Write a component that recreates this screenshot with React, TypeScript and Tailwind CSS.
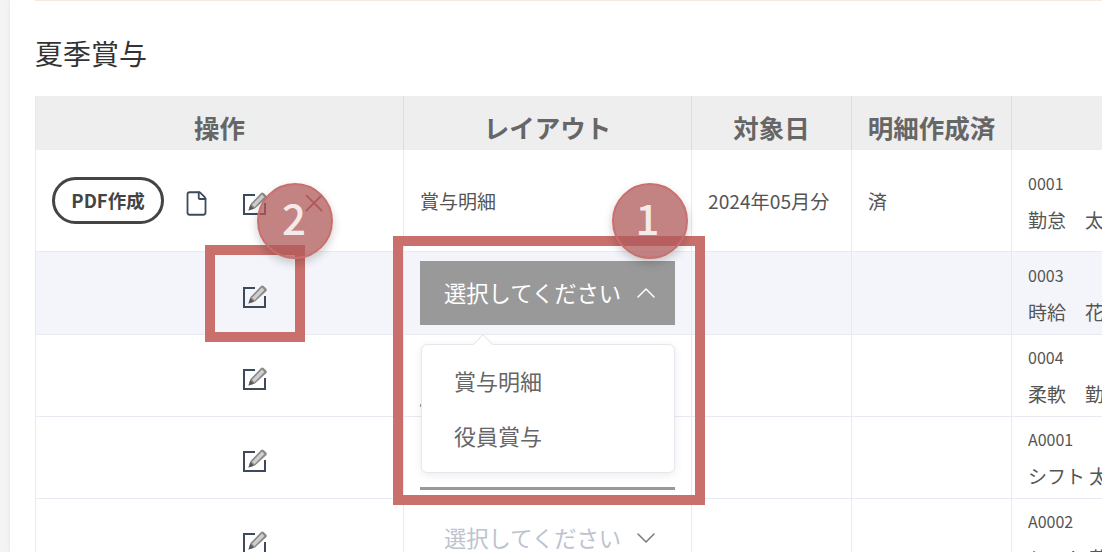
import { ChevronDown, ChevronUp, File, X } from "lucide-react";

const FONT = "font-['Noto_Sans_CJK_JP','Noto_Sans',sans-serif]";

function EditIcon() {
  return (
    <svg width="26" height="26" viewBox="0 0 26 26" fill="none" className="block">
      <path d="M13 5H2V24H23V13" stroke="#3d4a5c" strokeWidth="2" />
      <path d="M6.5 20.5l2-6.4L19 3a1.9 1.9 0 0 1 2.6 0l2.6 2.6a1.9 1.9 0 0 1 0 2.6L13 18.6z" fill="#8a8a8a" />
      <path d="M10 14.8l10-10.2 2.4 2.4-10 10.2z" fill="#cfcfcf" />
      <path d="M6.5 20.5l1.7-5.4 3.7 3.7z" fill="#5a5a5a" />
    </svg>
  );
}

function Person({ code, name }: { code: string; name: string }) {
  return (
    <div className="pl-4 whitespace-nowrap">
      <div className="text-[16px] leading-[24px] text-[#555]">{code}</div>
      <div className="mt-[13px] text-[19px] leading-[24px] text-[#555]">{name}</div>
    </div>
  );
}

function Badge({ n, className }: { n: number; className: string }) {
  return (
    <div
      className={`absolute top-[183px] w-[76px] h-[76px] pb-[10px] rounded-full bg-[#b05a5a]/75 border-2 border-[#c96f6d] shadow-[0_4px_10px_rgba(0,0,0,0.2)] flex items-center justify-center text-[42px] font-medium text-[#f5e9e9] ${className}`}
    >
      {n}
    </div>
  );
}

function EditCell() {
  return (
    <div className="pl-[206px] mt-[6px]">
      <EditIcon />
    </div>
  );
}

const rowLine = "border-b border-[#e9eaf1]";
const cellLine = "border-r border-[#e9eaf1]";
const headCell = "border-r border-[#dddddd] font-bold pt-[8px]";

export default function App() {
  return (
    <div className={`relative w-[1102px] h-[552px] overflow-hidden bg-[#f4f4f4] ${FONT}`}>
      <div className="ml-[10px] h-full bg-white pl-[25px] shadow-[0_0_4px_rgba(0,0,0,0.08)]">
        <div className="h-px bg-[#f3e9dc]" />
        <h2 className="mt-[31px] h-[42px] text-[28px] leading-[42px] text-[#333]">夏季賞与</h2>
        <div className="mt-[22px] w-[1200px]">
          <table className="table-fixed border-collapse w-[1200px] border-l border-[#e9eaf1]">
            <colgroup>
              <col className="w-[368px]" />
              <col className="w-[288px]" />
              <col className="w-[160px]" />
              <col className="w-[160px]" />
              <col />
            </colgroup>
            <thead>
              <tr className="h-[54px] bg-[#eeeeee] text-[25.5px] font-bold text-[#666]">
                <th className={headCell}>操作</th>
                <th className={headCell}>レイアウト</th>
                <th className={headCell}>対象日</th>
                <th className={headCell}>明細作成済</th>
                <th />
              </tr>
            </thead>
            <tbody>
              <tr className={`h-[101px] ${rowLine}`}>
                <td className={cellLine}>
                  <div className="flex items-center pl-4">
                    <button className="w-[112px] h-[47px] pt-[2px] rounded-full border-[3px] border-[#444] text-[18.5px] font-bold text-[#444] flex items-center justify-center">
                      PDF作成
                    </button>
                    <File size={27} strokeWidth={1.6} className="ml-[19px] mt-[6px] text-[#3d4a5c]" />
                    <div className="ml-[32px] mt-[6px]">
                      <EditIcon />
                    </div>
                    <X size={30} strokeWidth={1.5} className="ml-[31px] mt-[6px] text-[#a9636a]" />
                  </div>
                </td>
                <td className={`${cellLine} pl-4 pt-[2px] text-[19px] text-[#555]`}>賞与明細</td>
                <td className={`${cellLine} pl-4 pt-[2px] text-[19.2px] text-[#555]`}>2024年05月分</td>
                <td className={`${cellLine} pl-4 pt-[2px] text-[19px] text-[#555]`}>済</td>
                <td className="pt-[2px]"><Person code="0001" name="勤怠　太郎" /></td>
              </tr>
              <tr className={`h-[83px] bg-[#f4f5fa] ${rowLine}`}>
                <td className={cellLine}>
                  <EditCell />
                </td>
                <td className={`${cellLine} relative pl-4`}>
                  <div className="relative w-[255px] h-[64px] bg-[#999999] flex items-center pl-6 text-[22.3px] text-white">
                    選択してください
                    <ChevronUp size={32} strokeWidth={1.1} className="ml-[9px]" />
                  </div>
                  <div className="absolute left-4 top-[152px] w-px h-[3px] bg-[#999999]" />
                  <div className="absolute z-10 left-[17px] top-[92px] w-[254px] h-[129px] rounded-md bg-white border border-[#e6e6ee] shadow-[0_2px_10px_rgba(0,0,0,0.08)] py-[8px] pl-8 text-[22px] text-[#666]">
                    <span className="absolute left-[54px] -top-[8px] w-[14px] h-[14px] rotate-45 bg-white border-l border-t border-[#e6e6ee]" />
                    <div className="h-[55px] leading-[55px]">賞与明細</div>
                    <div className="h-[55px] leading-[55px]">役員賞与</div>
                  </div>
                  <div className="absolute z-10 left-4 top-[235px] w-[255px] h-[3px] bg-[#999999]" />
                </td>
                <td className={cellLine} />
                <td className={cellLine} />
                <td className="pt-[2px]"><Person code="0003" name="時給　花子" /></td>
              </tr>
              <tr className={`h-[82px] ${rowLine}`}>
                <td className={cellLine}>
                  <EditCell />
                </td>
                <td className={cellLine} />
                <td className={cellLine} />
                <td className={cellLine} />
                <td><Person code="0004" name="柔軟　勤務" /></td>
              </tr>
              <tr className={`h-[82px] ${rowLine}`}>
                <td className={cellLine}>
                  <EditCell />
                </td>
                <td className={cellLine} />
                <td className={cellLine} />
                <td className={cellLine} />
                <td><Person code="A0001" name="シフト 太郎" /></td>
              </tr>
              <tr className={`h-[82px] ${rowLine}`}>
                <td className={cellLine}>
                  <EditCell />
                </td>
                <td className={cellLine}>
                  <div className="w-[255px] ml-4 -mt-[2px] h-[64px] flex items-center pl-6 text-[22.3px] text-[#bcc3cf]">
                    選択してください
                    <ChevronDown size={32} strokeWidth={1.1} className="ml-[9px] text-[#777]" />
                  </div>
                </td>
                <td className={cellLine} />
                <td className={cellLine} />
                <td><Person code="A0002" name="シフト 花子" /></td>
              </tr>
            </tbody>
          </table>
        </div>
      </div>

      {/* annotation overlays */}
      <div className="absolute z-20 left-[393px] top-[236px] w-[312px] h-[269px] border-[10px] border-[#c9706c]" />
      <div className="absolute z-20 left-[205px] top-[245px] w-[100px] h-[97px] border-[10px] border-[#c9706c]" />
      <Badge n={1} className="z-30 left-[612px] pr-[5px]" />
      <Badge n={2} className="z-30 left-[257px] pr-[2px]" />
    </div>
  );
}
